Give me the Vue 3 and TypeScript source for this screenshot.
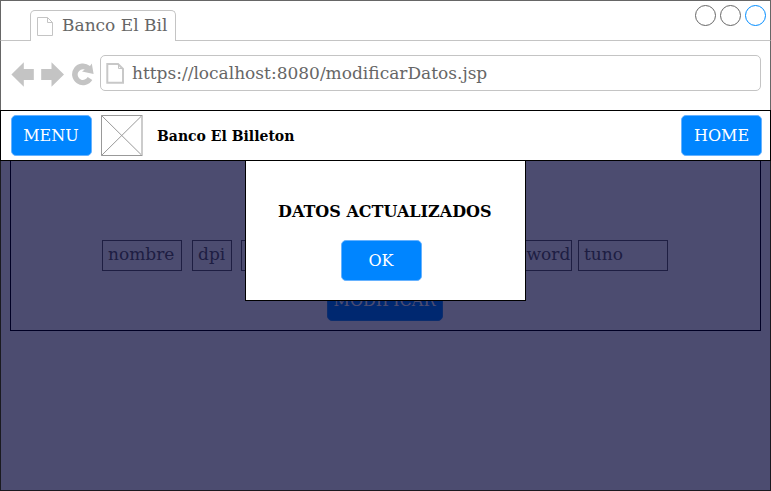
<script setup lang="ts">
interface Field {
  label: string
  width: number
  gap: number
  inset: number
}

const pageTitle = 'Banco El Bil'
const url = 'https://localhost:8080/modificarDatos.jsp'

const fields: Field[] = [
  { label: 'nombre', width: 80, gap: 10, inset: 5 },
  { label: 'dpi', width: 40, gap: 9, inset: 5 },
  { label: '', width: 110, gap: 10, inset: 5 },
  { label: '', width: 110, gap: 10, inset: 5 },
  { label: 'password', width: 91, gap: 6, inset: 6 },
  { label: 'tuno', width: 90, gap: 0, inset: 5 },
]

const windowControls: string[] = ['#666666', '#666666', '#008cff']
</script>

<template>
  <div class="window">
    <div class="tabs">
      <div class="tab">
        <svg class="tab-icon" width="18" height="21" viewBox="0 0 18 21">
          <path d="M1.5 1.5H11.5L16.5 6.5V19.5H1.5Z M11.5 1.5V6.5H16.5" fill="none" stroke="#c4c4c4" />
        </svg>
        <span>{{ pageTitle }}</span>
      </div>
      <div class="controls">
        <svg v-for="(color, i) in windowControls" :key="i" width="22" height="22" viewBox="0 0 22 22">
          <circle cx="10.5" cy="10.5" r="10" fill="none" :stroke="color" />
        </svg>
      </div>
    </div>

    <div class="toolbar">
      <svg class="nav-icons" width="84" height="26" viewBox="0 0 84 26" fill="#c4c4c4">
        <path d="M0.4 12.5L12.8 0.3V7H22.8V18H12.8V24.7Z" />
        <path d="M53 12.5L40.5 0.3V7H30.2V18H40.5V24.7Z" />
        <path d="M79 4L80.8 1.4L82.6 12L71 9.4L73.8 7.6A5.3 5.3 0 1 0 76.7 15L81.3 18A10.9 10.9 0 1 1 79 4Z" />
      </svg>
      <div class="address">
        <svg width="19" height="22" viewBox="0 0 19 22">
          <path d="M1.3 1H12L17 6V19.7H1.3Z" fill="none" stroke="#c8c8c8" stroke-width="2" />
          <path d="M12.5 1V5.5H17" fill="none" stroke="#c4c4c4" />
        </svg>
        <span>{{ url }}</span>
      </div>
    </div>

    <header class="navbar">
      <button class="btn">MENU</button>
      <svg class="logo" width="42" height="41" viewBox="0 0 42 41">
        <path d="M0.5 0.5L41 40.5M41 0.5L0.5 40.5" stroke="#999" fill="none" />
        <path d="M41 0V41" stroke="#ccc" stroke-width="2" />
        <path d="M41 0.5H0.5V40.5H41" stroke="#999" fill="none" />
      </svg>
      <strong class="brand">Banco El Billeton</strong>
      <button class="btn home">HOME</button>
    </header>

    <main class="content">
      <section class="panel">
        <div class="fields">
          <div
            v-for="(field, i) in fields"
            :key="i"
            class="field"
            :style="{ width: field.width + 'px', marginRight: field.gap + 'px', paddingLeft: field.inset + 'px' }"
          >{{ field.label }}</div>
        </div>
        <button class="btn submit">MODIFICAR</button>
      </section>
      <div class="shade"></div>
      <div class="modal" role="dialog">
        <strong class="message">DATOS ACTUALIZADOS</strong>
        <button class="btn ok">OK</button>
      </div>
    </main>
  </div>
</template>

<style>
body {
  margin: 0;
  background: #fff;
}
</style>

<style scoped>
.window,
.window * {
  box-sizing: border-box;
}

.window {
  width: 771px;
  height: 491px;
  overflow: hidden;
  display: flex;
  flex-direction: column;
  background: #fff;
  font-family: "DejaVu Serif", serif;
  font-size: 17px;
  color: #666;
}

.tabs {
  flex: none;
  height: 41px;
  display: flex;
  justify-content: space-between;
  border: 1px solid #666;
  border-bottom-color: #c4c4c4;
  padding: 9px 4px 0 29px;
}

.tab {
  width: 146px;
  height: 31px;
  display: flex;
  background: #fff;
  border: 1px solid #c4c4c4;
  border-bottom: 0;
  border-radius: 5px 5px 0 0;
  padding-left: 5px;
  white-space: nowrap;
  line-height: 29px;
}

.tab-icon {
  margin: 5px 8px 0 0;
}

.controls {
  display: flex;
  gap: 3px;
  margin-top: -5px;
  margin-right: -1px;
}

.toolbar {
  flex: none;
  height: 69px;
  display: flex;
  align-items: flex-start;
  border: solid #666;
  border-width: 0 1px;
  padding: 14px 9px 0 10px;
}

.nav-icons {
  margin: 7px 5px 0 0;
}

.address {
  flex: 1;
  height: 36px;
  display: flex;
  border: 1px solid #c4c4c4;
  border-radius: 5px;
  padding-left: 5px;
  line-height: 34px;
}

.address svg {
  margin: 7px 7px 0 0;
}

.navbar {
  flex: none;
  height: 51px;
  display: flex;
  align-items: flex-start;
  border: 1px solid #000;
  padding: 4px 8px 0 10px;
}

.btn {
  width: 81px;
  height: 41px;
  flex: none;
  padding: 0 1px 0 0;
  border: 1px solid #66b2ff;
  border-radius: 5px;
  background: #0085ff;
  color: #fff;
  font-family: inherit;
  font-size: 16px;
  line-height: 38px;
}

.logo {
  margin: 0 14px 0 9px;
}

.brand {
  font-size: 14px;
  line-height: 42px;
  color: #000;
}

.home {
  margin-left: auto;
  padding-right: 0;
}

.content {
  position: relative;
  flex: 1;
  padding: 0 10px;
}

.panel {
  height: 170px;
  display: flex;
  flex-direction: column;
  align-items: flex-start;
  border: 1px solid #000;
  border-top: 0;
  padding: 79px 0 0 91px;
}

.fields {
  display: flex;
}

.field {
  flex: none;
  height: 31px;
  border: 1px solid #666;
  line-height: 26px;
  white-space: nowrap;
}

.submit {
  width: 116px;
  margin: 9px 0 0 225px;
  border-color: #2b96f5;
}

.shade {
  position: absolute;
  inset: 0;
  background: rgba(0, 0, 51, 0.7);
  border: 1px solid #1a1a20;
  border-top: 0;
}

.modal {
  position: absolute;
  top: -1px;
  left: 245px;
  width: 281px;
  height: 141px;
  display: flex;
  flex-direction: column;
  align-items: flex-start;
  background: #fff;
  border: 1px solid #000;
  padding-top: 40px;
}

.message {
  font-size: 16px;
  line-height: 22px;
  color: #000;
  margin: 0 0 17px 32px;
}

.ok {
  margin-left: 95px;
}
</style>
